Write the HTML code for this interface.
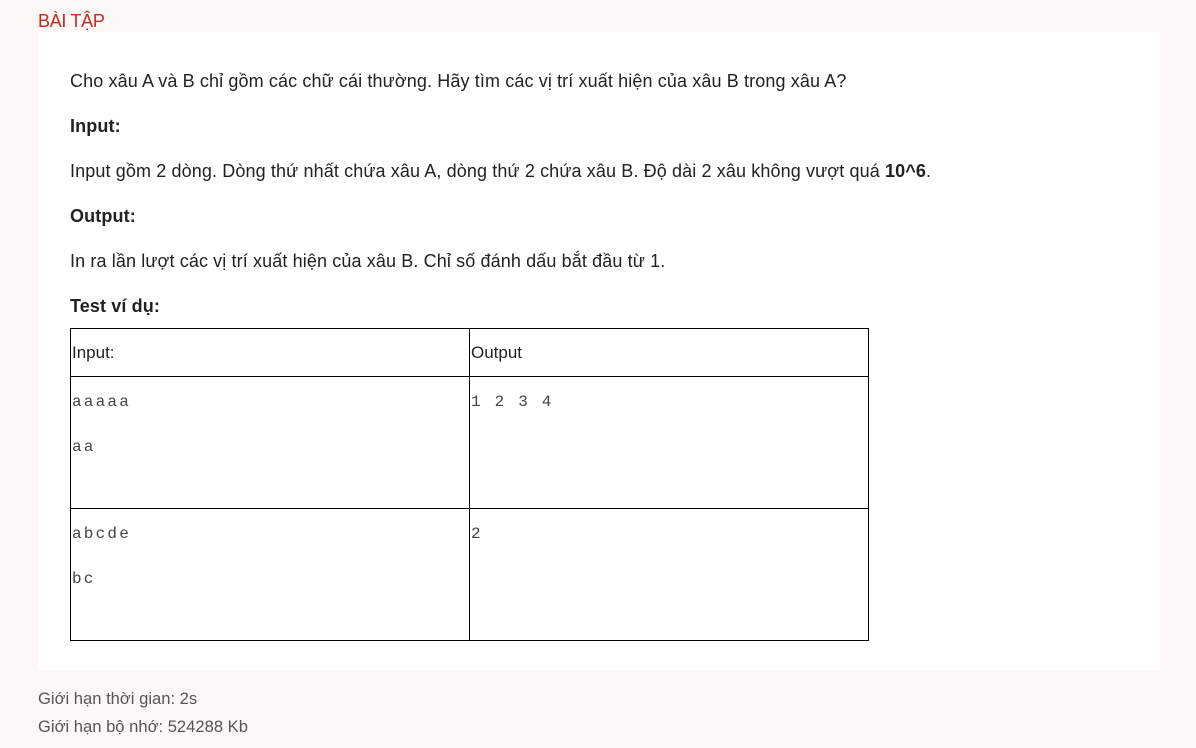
<!DOCTYPE html>
<html><head><meta charset="utf-8"><style>
body{margin:0;width:1196px;height:748px;background:#fcf8f7;font-family:"Liberation Sans",sans-serif;position:relative;overflow:hidden;color:#222}
.t{position:absolute;white-space:nowrap}
.panel{position:absolute;left:38px;top:32px;width:1122px;height:638px;background:#fff}
p{margin:0}
.t.m{font-family:"Liberation Mono","DejaVu Sans Mono",monospace;font-size:16px;letter-spacing:2.2px;color:#444}
.cell{position:absolute;border:1px solid #000;box-sizing:border-box}
.b{font-size:18px;letter-spacing:0.12px}
</style></head><body>
<div class="t" style="left:38px;top:11px;font-size:18px;color:#c8281e;letter-spacing:-0.3px">BÀI TẬP</div>
<div class="panel"></div>
<div class="t b" style="left:70px;top:71px">Cho xâu A và B chỉ gồm các chữ cái thường. Hãy tìm các vị trí xuất hiện của xâu B trong xâu A?</div>
<div class="t b" style="left:70px;top:116px;font-weight:bold">Input:</div>
<div class="t b" style="left:70px;top:161px">Input gồm 2 dòng. Dòng thứ nhất chứa xâu A, dòng thứ 2 chứa xâu B. Độ dài 2 xâu không vượt quá <b>10^6</b>.</div>
<div class="t b" style="left:70px;top:206px;font-weight:bold">Output:</div>
<div class="t b" style="left:70px;top:251px">In ra lần lượt các vị trí xuất hiện của xâu B. Chỉ số đánh dấu bắt đầu từ 1.</div>
<div class="t b" style="left:70px;top:296px;font-weight:bold">Test ví dụ:</div>
<div class="cell" style="left:70px;top:328px;width:400px;height:49px"></div>
<div class="cell" style="left:469px;top:328px;width:400px;height:49px"></div>
<div class="cell" style="left:70px;top:376px;width:400px;height:133px"></div>
<div class="cell" style="left:469px;top:376px;width:400px;height:133px"></div>
<div class="cell" style="left:70px;top:508px;width:400px;height:133px"></div>
<div class="cell" style="left:469px;top:508px;width:400px;height:133px"></div>
<div class="t" style="left:72px;top:343px;font-size:17px">Input:</div>
<div class="t" style="left:471px;top:343px;font-size:17px">Output</div>
<div class="t m" style="left:72px;top:393px">aaaaa</div>
<div class="t m" style="left:72px;top:438px">aa</div>
<div class="t m" style="left:471px;top:393px">1 2 3 4</div>
<div class="t m" style="left:72px;top:525px">abcde</div>
<div class="t m" style="left:72px;top:570px">bc</div>
<div class="t m" style="left:471px;top:525px">2</div>
<div class="t" style="left:38px;top:689px;font-size:16.6px;color:#555">Giới hạn thời gian: 2s</div>
<div class="t" style="left:38px;top:717px;font-size:16.6px;color:#555">Giới hạn bộ nhớ: 524288 Kb</div>
</body></html>
